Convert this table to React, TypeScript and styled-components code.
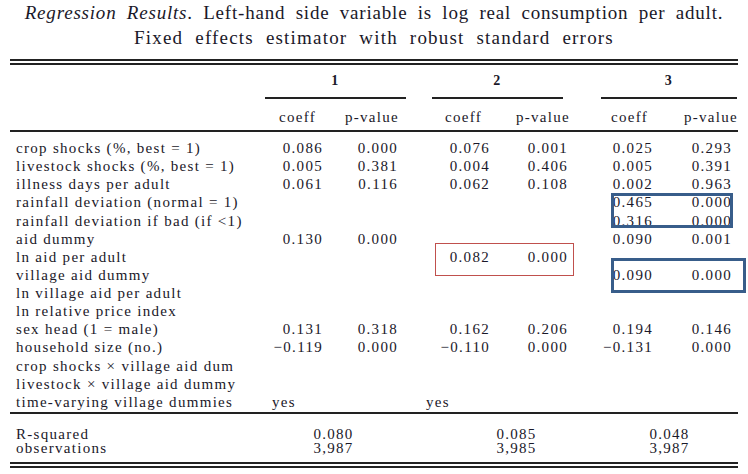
import React from 'react';
import styled, { createGlobalStyle } from 'styled-components';

const Global = createGlobalStyle`
  html, body { margin: 0; padding: 0; background: #ffffff; }
  body {
    width: 748px; overflow: hidden;
    font-family: "Liberation Serif", "DejaVu Serif", serif;
    color: #1a1829;
  }
`;

const Page = styled.div`
  position: relative;
  width: 748px;
  height: 474px;
`;

const Title = styled.div`
  height: 50px;
  text-align: center;
  font-size: 19px;
  line-height: 25px;
  white-space: nowrap;
  em { font-style: italic; }
`;

const TitleLine = styled.div<{ $ls: number; $ws: number }>`
  height: 25px;
  letter-spacing: ${p => p.$ls}px;
  word-spacing: ${p => p.$ws}px;
`;

const Table = styled.div`
  margin: 9px 10px 0 10px;
  width: 728px;
  font-size: 15px;
  letter-spacing: 1.3px;
`;

const DoubleRule = styled.div<{ $gap: number }>`
  height: ${p => p.$gap}px;
  border-top: 2px solid #222;
  border-bottom: 2px solid #222;
`;

const Section = styled.div<{ $pt: number; $pb: number; $row?: string; $top?: boolean; $bottom?: boolean }>`
  display: grid;
  grid-template-columns: 255px 70px 97px 68px 101px 69px 68px;
  grid-auto-rows: ${p => p.$row ?? 'auto'};
  line-height: ${p => p.$row ?? '18px'};
  padding-top: ${p => p.$pt}px;
  padding-bottom: ${p => p.$pb}px;
  border-top: ${p => (p.$top ? '2px solid #222' : 'none')};
  border-bottom: ${p => (p.$bottom ? '2px solid #222' : 'none')};
`;

const GroupHead = styled.div<{ $col: number; $mr: number }>`
  grid-column: ${p => p.$col} / span 2;
  margin-right: ${p => p.$mr}px;
  text-align: center;
  border-bottom: 2px solid #222;
  padding: 7px 0;
  font-weight: bold;
  font-size: 14px;
`;

const SubHead = styled.div<{ $col: number; $pr: number }>`
  grid-column: ${p => p.$col};
  text-align: right;
  padding-right: ${p => p.$pr}px;
  padding-top: 9px;
  padding-bottom: 4px;
  white-space: nowrap;
`;

const Label = styled.div`
  grid-column: 1;
  padding-left: 6px;
  white-space: nowrap;
`;

const Num = styled.div<{ $pr: number }>`
  text-align: right;
  padding-right: ${p => p.$pr}px;
  white-space: nowrap;
`;

const Yes = styled.div<{ $indent: number }>`
  text-align: left;
  text-indent: ${p => p.$indent}px;
  white-space: nowrap;
`;

const Stat = styled.div<{ $mr: number }>`
  grid-column: span 2;
  text-align: center;
  margin-right: ${p => p.$mr}px;
  white-space: nowrap;
`;

const Box = styled.div<{ $color: string; $w: number }>`
  position: absolute;
  box-sizing: border-box;
  border: ${p => p.$w}px solid ${p => p.$color};
  pointer-events: none;
`;

const numPad = [12, 34, 10, 33, 17, 6];

const rows: string[][] = [
  ['crop shocks (%, best = 1)', '0.086', '0.000', '0.076', '0.001', '0.025', '0.293'],
  ['livestock shocks (%, best = 1)', '0.005', '0.381', '0.004', '0.406', '0.005', '0.391'],
  ['illness days per adult', '0.061', '0.116', '0.062', '0.108', '0.002', '0.963'],
  ['rainfall deviation (normal = 1)', '', '', '', '', '0.465', '0.000'],
  ['rainfall deviation if bad (if <1)', '', '', '', '', '0.316', '0.000'],
  ['aid dummy', '0.130', '0.000', '', '', '0.090', '0.001'],
  ['ln aid per adult', '', '', '0.082', '0.000', '', ''],
  ['village aid dummy', '', '', '', '', '0.090', '0.000'],
  ['ln village aid per adult', '', '', '', '', '', ''],
  ['ln relative price index', '', '', '', '', '', ''],
  ['sex head (1 = male)', '0.131', '0.318', '0.162', '0.206', '0.194', '0.146'],
  ['household size (no.)', '\u22120.119', '0.000', '\u22120.110', '0.000', '\u22120.131', '0.000'],
  ['crop shocks \u00d7 village aid dum', '', '', '', '', '', ''],
  ['livestock \u00d7 village aid dummy', '', '', '', '', '', ''],
];

export default function App() {
  return (
    <Page>
      <Global />
      <Title>
        <TitleLine $ls={0.8} $ws={4.8}>
          <em>Regression Results</em>. Left-hand side variable is log real consumption per adult.
        </TitleLine>
        <TitleLine $ls={1.2} $ws={6}>
          Fixed effects estimator with robust standard errors
        </TitleLine>
      </Title>
      <Table>
        <DoubleRule $gap={2} />
        <Section $pt={0} $pb={0}>
          <GroupHead $col={2} $mr={26}>1</GroupHead>
          <GroupHead $col={4} $mr={38}>2</GroupHead>
          <GroupHead $col={6} $mr={1}>3</GroupHead>
        </Section>
        <Section $pt={0} $pb={0}>
          <SubHead $col={2} $pr={19}>coeff</SubHead>
          <SubHead $col={3} $pr={33}>p-value</SubHead>
          <SubHead $col={4} $pr={18}>coeff</SubHead>
          <SubHead $col={5} $pr={31}>p-value</SubHead>
          <SubHead $col={6} $pr={22}>coeff</SubHead>
          <SubHead $col={7} $pr={0}>p-value</SubHead>
        </Section>
        <Section $pt={7} $pb={1} $row="18.14px" $top $bottom>
          {rows.map((r) => (
            <React.Fragment key={r[0]}>
              <Label>{r[0]}</Label>
              {r.slice(1).map((v, i) => (
                <Num key={i} $pr={numPad[i]}>{v}</Num>
              ))}
            </React.Fragment>
          ))}
          <Label>time-varying village dummies</Label>
          <Yes $indent={7}>yes</Yes>
          <div />
          <Yes $indent={-6}>yes</Yes>
        </Section>
        <Section $pt={13} $pb={6} $row="14.5px">
          <Label>R-squared</Label>
          <Stat $mr={30}>0.080</Stat>
          <Stat $mr={0}>0.085</Stat>
          <Stat $mr={0}>0.048</Stat>
          <Label>observations</Label>
          <Stat $mr={30}>3,987</Stat>
          <Stat $mr={0}>3,985</Stat>
          <Stat $mr={0}>3,987</Stat>
        </Section>
        <DoubleRule $gap={2} />
      </Table>
      <Box $color="#385d8a" $w={3} style={{ left: 611, top: 193, width: 122, height: 35 }} />
      <Box $color="#385d8a" $w={3} style={{ left: 611, top: 258, width: 135, height: 35 }} />
      <Box $color="#c0504d" $w={1} style={{ left: 435, top: 243, width: 139, height: 33 }} />
    </Page>
  );
}
